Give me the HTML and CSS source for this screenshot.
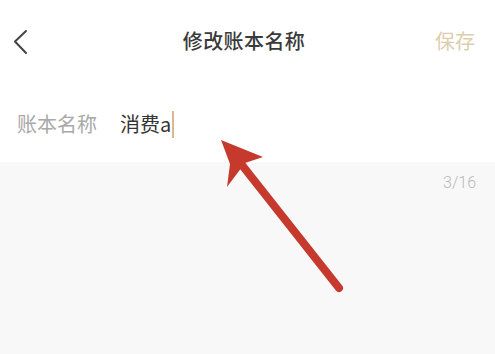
FILE: index.html
```html
<!DOCTYPE html>
<html lang="zh-CN">
<head>
<meta charset="utf-8">
<link rel="stylesheet" href="styles.css">
</head>
<body>
<div class="page">
  <header class="nav">
    <span class="back">
      <svg width="16" height="26" viewBox="0 0 16 26"><path d="M13 2 L2 12.5 L13 24" fill="none" stroke="#444" stroke-width="2" stroke-linecap="round" stroke-linejoin="round"/></svg>
    </span>
    <h1 class="title">修改账本名称</h1>
    <span class="save">保存</span>
  </header>
  <div class="field">
    <span class="label">账本名称</span>
    <span class="value">消费a</span><span class="caret"></span>
  </div>
  <div class="rest">
    <div class="count">3/16</div>
  </div>
  <svg class="arrow" width="495" height="354" viewBox="0 0 495 354">
    <line x1="339" y1="288" x2="238" y2="160" stroke="#c63a2e" stroke-width="8" stroke-linecap="round"/>
    <polygon points="221,140 263,157 245,163 227,187 230,164" fill="#c63a2e"/>
  </svg>
</div>
</body>
</html>
```
FILE: styles.css
```css
html, body {
  margin: 0;
  padding: 0;
  background: #f8f8f8;
}
body {
  font-family: "Noto Sans CJK SC", "Noto Sans", sans-serif;
  width: 495px;
  height: 354px;
  overflow: hidden;
}
.page {
  position: relative;
  width: 495px;
  height: 354px;
  display: flex;
  flex-direction: column;
}
.nav {
  height: 82px;
  background: #fff;
  display: flex;
  align-items: center;
  justify-content: space-between;
  padding: 0 20px 0 13px;
}
.back {
  width: 60px;
  display: flex;
  align-items: center;
  padding-top: 1px;
}
.title {
  margin: 0;
  font-size: 20px;
  font-weight: 500;
  color: #3a3a3a;
  line-height: 1;
  letter-spacing: 0.4px;
}
.save {
  width: 60px;
  text-align: right;
  font-size: 20px;
  color: #ddcdae;
  line-height: 1;
}
.field {
  height: 80px;
  background: #fff;
  display: flex;
  align-items: center;
  padding: 4px 0 0 17px;
  box-sizing: border-box;
}
.label {
  font-size: 20px;
  color: #a9a9a9;
  width: 103px;
  line-height: 1;
}
.value {
  font-size: 20px;
  color: #333;
  line-height: 1;
}
.caret {
  display: inline-block;
  width: 2px;
  height: 27px;
  background: #d9b98c;
  margin-left: 1px;
}
.rest {
  flex: 1;
  background: #f8f8f8;
  padding: 12px 19px 0 0;
}
.count {
  text-align: right;
  font-family: "Roboto", "Noto Sans", sans-serif;
  font-weight: 300;
  font-size: 16px;
  color: #b8b8b8;
  line-height: 17px;
}
.arrow {
  position: absolute;
  left: 0;
  top: 0;
  pointer-events: none;
}
```
